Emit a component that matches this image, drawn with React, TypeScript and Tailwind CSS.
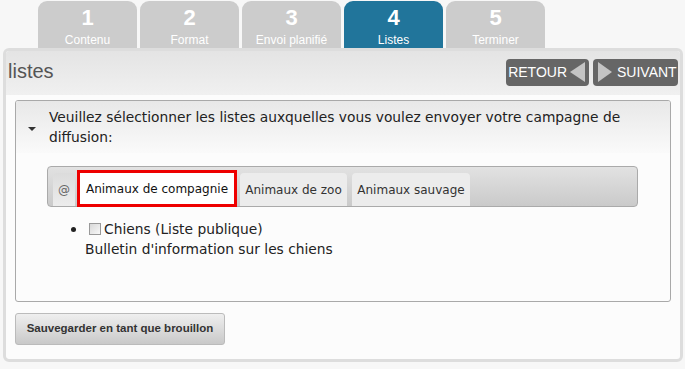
const steps = [
  { n: '1', label: 'Contenu' },
  { n: '2', label: 'Format' },
  { n: '3', label: 'Envoi planifié' },
  { n: '4', label: 'Listes', active: true },
  { n: '5', label: 'Terminer' },
];

export default function App() {
  return (
    <div
      className="w-[685px] h-[369px] overflow-hidden pt-px bg-[#f7f7f7]"
      style={{ fontFamily: '"Liberation Sans", Arial, sans-serif' }}
    >
      {/* Wizard steps */}
      <div className="flex gap-[3px] pl-[38px] h-[47px]">
        {steps.map((s) => (
          <div
            key={s.n}
            className={`w-[99px] rounded-t-[9px] flex flex-col items-center text-white ${
              s.active ? 'bg-[#21759b]' : 'bg-[#cccccc]'
            }`}
          >
            <span className="text-[22px] font-bold leading-none mt-[6px]">{s.n}</span>
            <span className="text-[12px] leading-none mt-[5px]">{s.label}</span>
          </div>
        ))}
      </div>

      {/* Main panel */}
      <div className="ml-[3px] w-[680px] h-[314px] border-[3px] border-[#dddddd] rounded-[6px] bg-[#fcfcfc] overflow-hidden">
        <div className="h-[44px] flex items-center justify-between pl-[2px] pr-[2px] bg-gradient-to-b from-[#e4e4e4] to-[#f0f0f0]">
          <h1 className="text-[20px] text-[#555555] leading-none -mt-[4px]">listes</h1>
          <div className="flex gap-[4px] -mt-[2px]">
            <button className="h-[27px] w-[83px] rounded-[4px] bg-[#666666] text-white text-[14px] flex items-center justify-end pr-[4px] gap-[3px]">
              <span>RETOUR</span>
              <svg width="15" height="20" viewBox="0 0 15 20">
                <path d="M15 0 L0 10 L15 20 Z" fill="#c4c4c4" />
              </svg>
            </button>
            <button className="h-[27px] w-[85px] rounded-[4px] bg-[#666666] text-white text-[14px] flex items-center pl-[5px] gap-[5px]">
              <svg width="14" height="20" viewBox="0 0 14 20">
                <path d="M0 0 L14 10 L0 20 Z" fill="#c4c4c4" />
              </svg>
              <span>SUIVANT</span>
            </button>
          </div>
        </div>

        <div className="px-[9px] pt-[5px]">
          <div className="h-[202px] border border-[#a9a9a9] rounded-[3px] bg-[#fcfcfc] overflow-hidden">
            <div
              className="h-[52px] flex items-start bg-gradient-to-b from-[#e8e8e8] to-[#fafafa] text-[13.8px] text-[#222222] leading-[20px] pt-[6px]"
              style={{ fontFamily: '"DejaVu Sans", Verdana, sans-serif' }}
            >
              <svg width="8" height="5" viewBox="0 0 8 5" className="ml-[12px] mt-[20px] shrink-0">
                <path d="M0 0 L8 0 L4 4 Z" fill="#333333" />
              </svg>
              <p className="ml-[13px] pr-[30px]">
                Veuillez sélectionner les listes auxquelles vous voulez envoyer votre campagne de diffusion:
              </p>
            </div>

            <div
              className="px-[31px] pt-[13px] text-[#222222]"
              style={{ fontFamily: '"DejaVu Sans", Verdana, sans-serif' }}
            >
              <div className="h-[41px] w-[591px] border border-[#aaaaaa] rounded-[4px] bg-gradient-to-b from-[#e2e2e2] to-[#cacaca] flex items-end pl-[5px] gap-[2px] text-[12px]">
                <div className="h-[33px] w-[22px] rounded-t-[4px] bg-gradient-to-b from-[#dcdcdc] to-[#ececec] flex items-center justify-center text-[#666666]">
                  @
                </div>
                <div className="h-[37px] w-[160px] border-[3px] border-[#ee0000] bg-white flex items-center justify-center -mb-[1px] text-[#111111]">
                  Animaux de compagnie
                </div>
                <div className="h-[33px] w-[107px] rounded-t-[4px] bg-[#ececec] flex items-center justify-center ml-[1px] text-[#333333]">
                  Animaux de zoo
                </div>
                <div className="h-[33px] w-[118px] rounded-t-[4px] bg-[#ececec] flex items-center justify-center ml-[3px] text-[#333333]">
                  Animaux sauvage
                </div>
              </div>

              <div className="mt-[12px] flex text-[13.8px] leading-[20px]">
                <span className="w-[5px] h-[5px] rounded-full bg-[#222222] ml-[24px] mt-[8px] shrink-0" />
                <div className="ml-[9px]">
                  <label className="flex items-center gap-[3px] ml-[4px]">
                    <span className="w-[12px] h-[12px] border border-[#999999] bg-gradient-to-br from-[#d8d8d8] to-[#f8f8f8] inline-block" />
                    <span>Chiens (Liste publique)</span>
                  </label>
                  <div>Bulletin d'information sur les chiens</div>
                </div>
              </div>
            </div>
          </div>

          <button className="mt-[11px] h-[32px] w-[210px] border border-[#bbbbbb] rounded-[3px] bg-gradient-to-b from-[#efefef] to-[#c9c9c9] text-[11.5px] font-bold text-[#333333]">
            Sauvegarder en tant que brouillon
          </button>
        </div>
      </div>
    </div>
  );
}
